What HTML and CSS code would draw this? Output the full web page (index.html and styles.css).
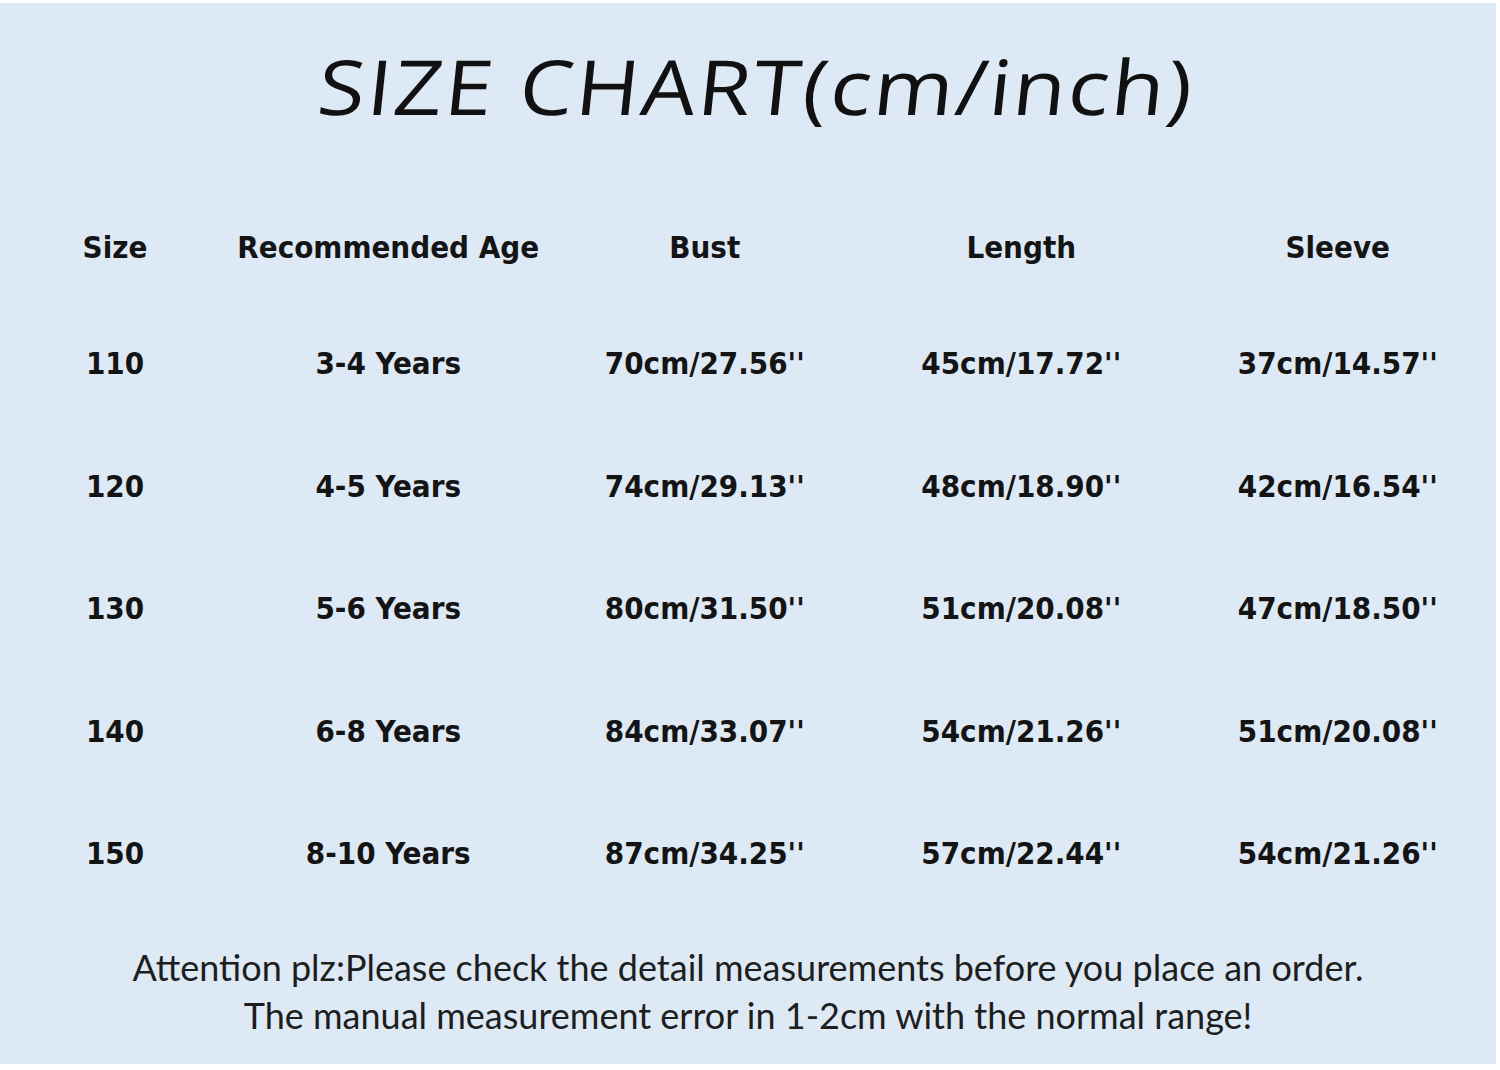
FILE: index.html
```html
<!DOCTYPE html>
<html>
<head>
<meta charset="utf-8">
<link rel="stylesheet" href="styles.css">
</head>
<body>
<div class="sheet">
  <h1 class="title"><span class="title-text">SIZE CHART(cm/inch)</span></h1>
  <div class="chart">
    <div class="row head">
      <div class="cell">Size</div>
      <div class="cell">Recommended Age</div>
      <div class="cell">Bust</div>
      <div class="cell">Length</div>
      <div class="cell">Sleeve</div>
    </div>
    <div class="row">
      <div class="cell">110</div>
      <div class="cell">3-4 Years</div>
      <div class="cell">70cm/27.56''</div>
      <div class="cell">45cm/17.72''</div>
      <div class="cell">37cm/14.57''</div>
    </div>
    <div class="row">
      <div class="cell">120</div>
      <div class="cell">4-5 Years</div>
      <div class="cell">74cm/29.13''</div>
      <div class="cell">48cm/18.90''</div>
      <div class="cell">42cm/16.54''</div>
    </div>
    <div class="row">
      <div class="cell">130</div>
      <div class="cell">5-6 Years</div>
      <div class="cell">80cm/31.50''</div>
      <div class="cell">51cm/20.08''</div>
      <div class="cell">47cm/18.50''</div>
    </div>
    <div class="row">
      <div class="cell">140</div>
      <div class="cell">6-8 Years</div>
      <div class="cell">84cm/33.07''</div>
      <div class="cell">54cm/21.26''</div>
      <div class="cell">51cm/20.08''</div>
    </div>
    <div class="row">
      <div class="cell">150</div>
      <div class="cell">8-10 Years</div>
      <div class="cell">87cm/34.25''</div>
      <div class="cell">57cm/22.44''</div>
      <div class="cell">54cm/21.26''</div>
    </div>
  </div>
  <div class="note">
    <p>Attention plz:Please check the detail measurements before you place an order.</p>
    <p>The manual measurement error in 1-2cm with the normal range!</p>
  </div>
</div>
</body>
</html>
```

FILE: styles.css
```css
html, body {
  margin: 0;
  padding: 0;
  background: #ffffff;
}
body {
  width: 1500px;
  height: 1070px;
  overflow: hidden;
}
.sheet {
  margin: 3px 4px 0 0;
  width: 1496px;
  height: 1061px;
  background: #dde9f5;
  display: flex;
  flex-direction: column;
}
.title {
  margin: 0;
  height: 189px;
  display: flex;
  align-items: center;
  justify-content: center;
  padding-bottom: 24px;
  box-sizing: border-box;
  font-family: "Open Sans", sans-serif;
  font-style: normal;
  font-weight: 400;
  font-size: 76px;
  color: #111;
  letter-spacing: 2px;
}
.title-text {
  display: inline-block;
  transform: skewX(-6deg) scaleX(1.13);
  padding-left: 16px;
}
.chart {
  display: flex;
  flex-direction: column;
}
.row {
  display: grid;
  grid-template-columns: 230px repeat(4, 316.5px);
  height: 122.5px;
  align-items: center;
}
.row.head {
  height: 110px;
}
.cell {
  text-align: center;
  font-family: "DejaVu Sans Condensed", "DejaVu Sans", sans-serif;
  font-weight: bold;
  font-size: 31px;
  color: #141414;
}
.note {
  margin-top: 28px;
  text-align: center;
  font-family: Lato, sans-serif;
  font-size: 36px;
  color: #1e1e1e;
}
.note p {
  margin: 0;
  line-height: 48px;
}
```
